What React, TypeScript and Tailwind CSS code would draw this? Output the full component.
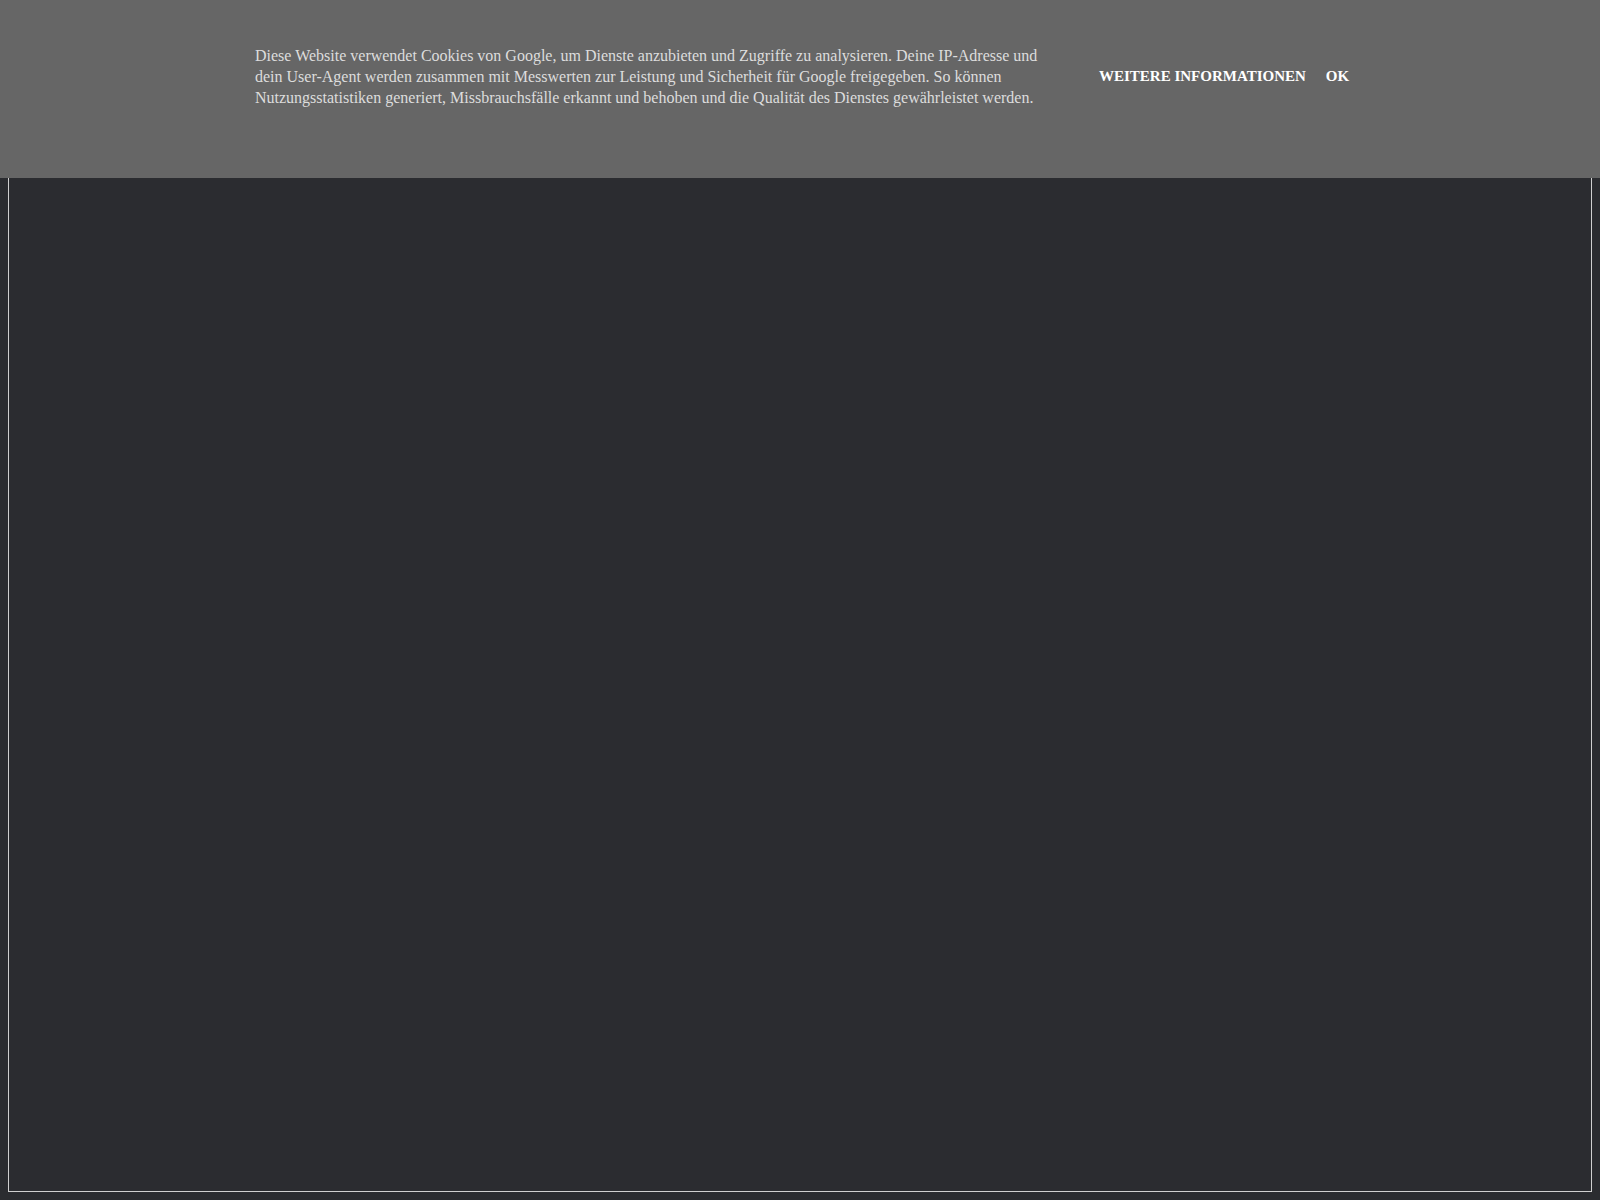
export default function App() {
  return (
    <div className="relative h-[1200px] w-[1600px] overflow-hidden bg-[#2b2c30] p-2 font-['Liberation_Serif','Times_New_Roman',serif]">
      {/* Page frame */}
      <div className="h-full w-full border border-[#d0d0d0] bg-[#2b2c30]" />

      {/* Cookie notice */}
      <div className="absolute left-0 right-0 top-0 h-[178px] bg-[#666666]">
        <div className="flex items-center pl-[255px] pt-[45px]">
          <p className="w-[795px] text-[16px] leading-[21.2px] text-[#dddddd]">
            Diese Website verwendet Cookies von Google, um Dienste anzubieten und Zugriffe zu analysieren. Deine IP-Adresse und dein User-Agent werden zusammen mit Messwerten zur Leistung und Sicherheit für Google freigegeben. So können Nutzungsstatistiken generiert, Missbrauchsfälle erkannt und behoben und die Qualität des Dienstes gewährleistet werden.
          </p>
          <div className="mb-[2px] ml-[49px] flex items-center gap-5 text-[15px] font-bold uppercase text-white">
            <span>Weitere Informationen</span>
            <span>OK</span>
          </div>
        </div>
      </div>
    </div>
  );
}
